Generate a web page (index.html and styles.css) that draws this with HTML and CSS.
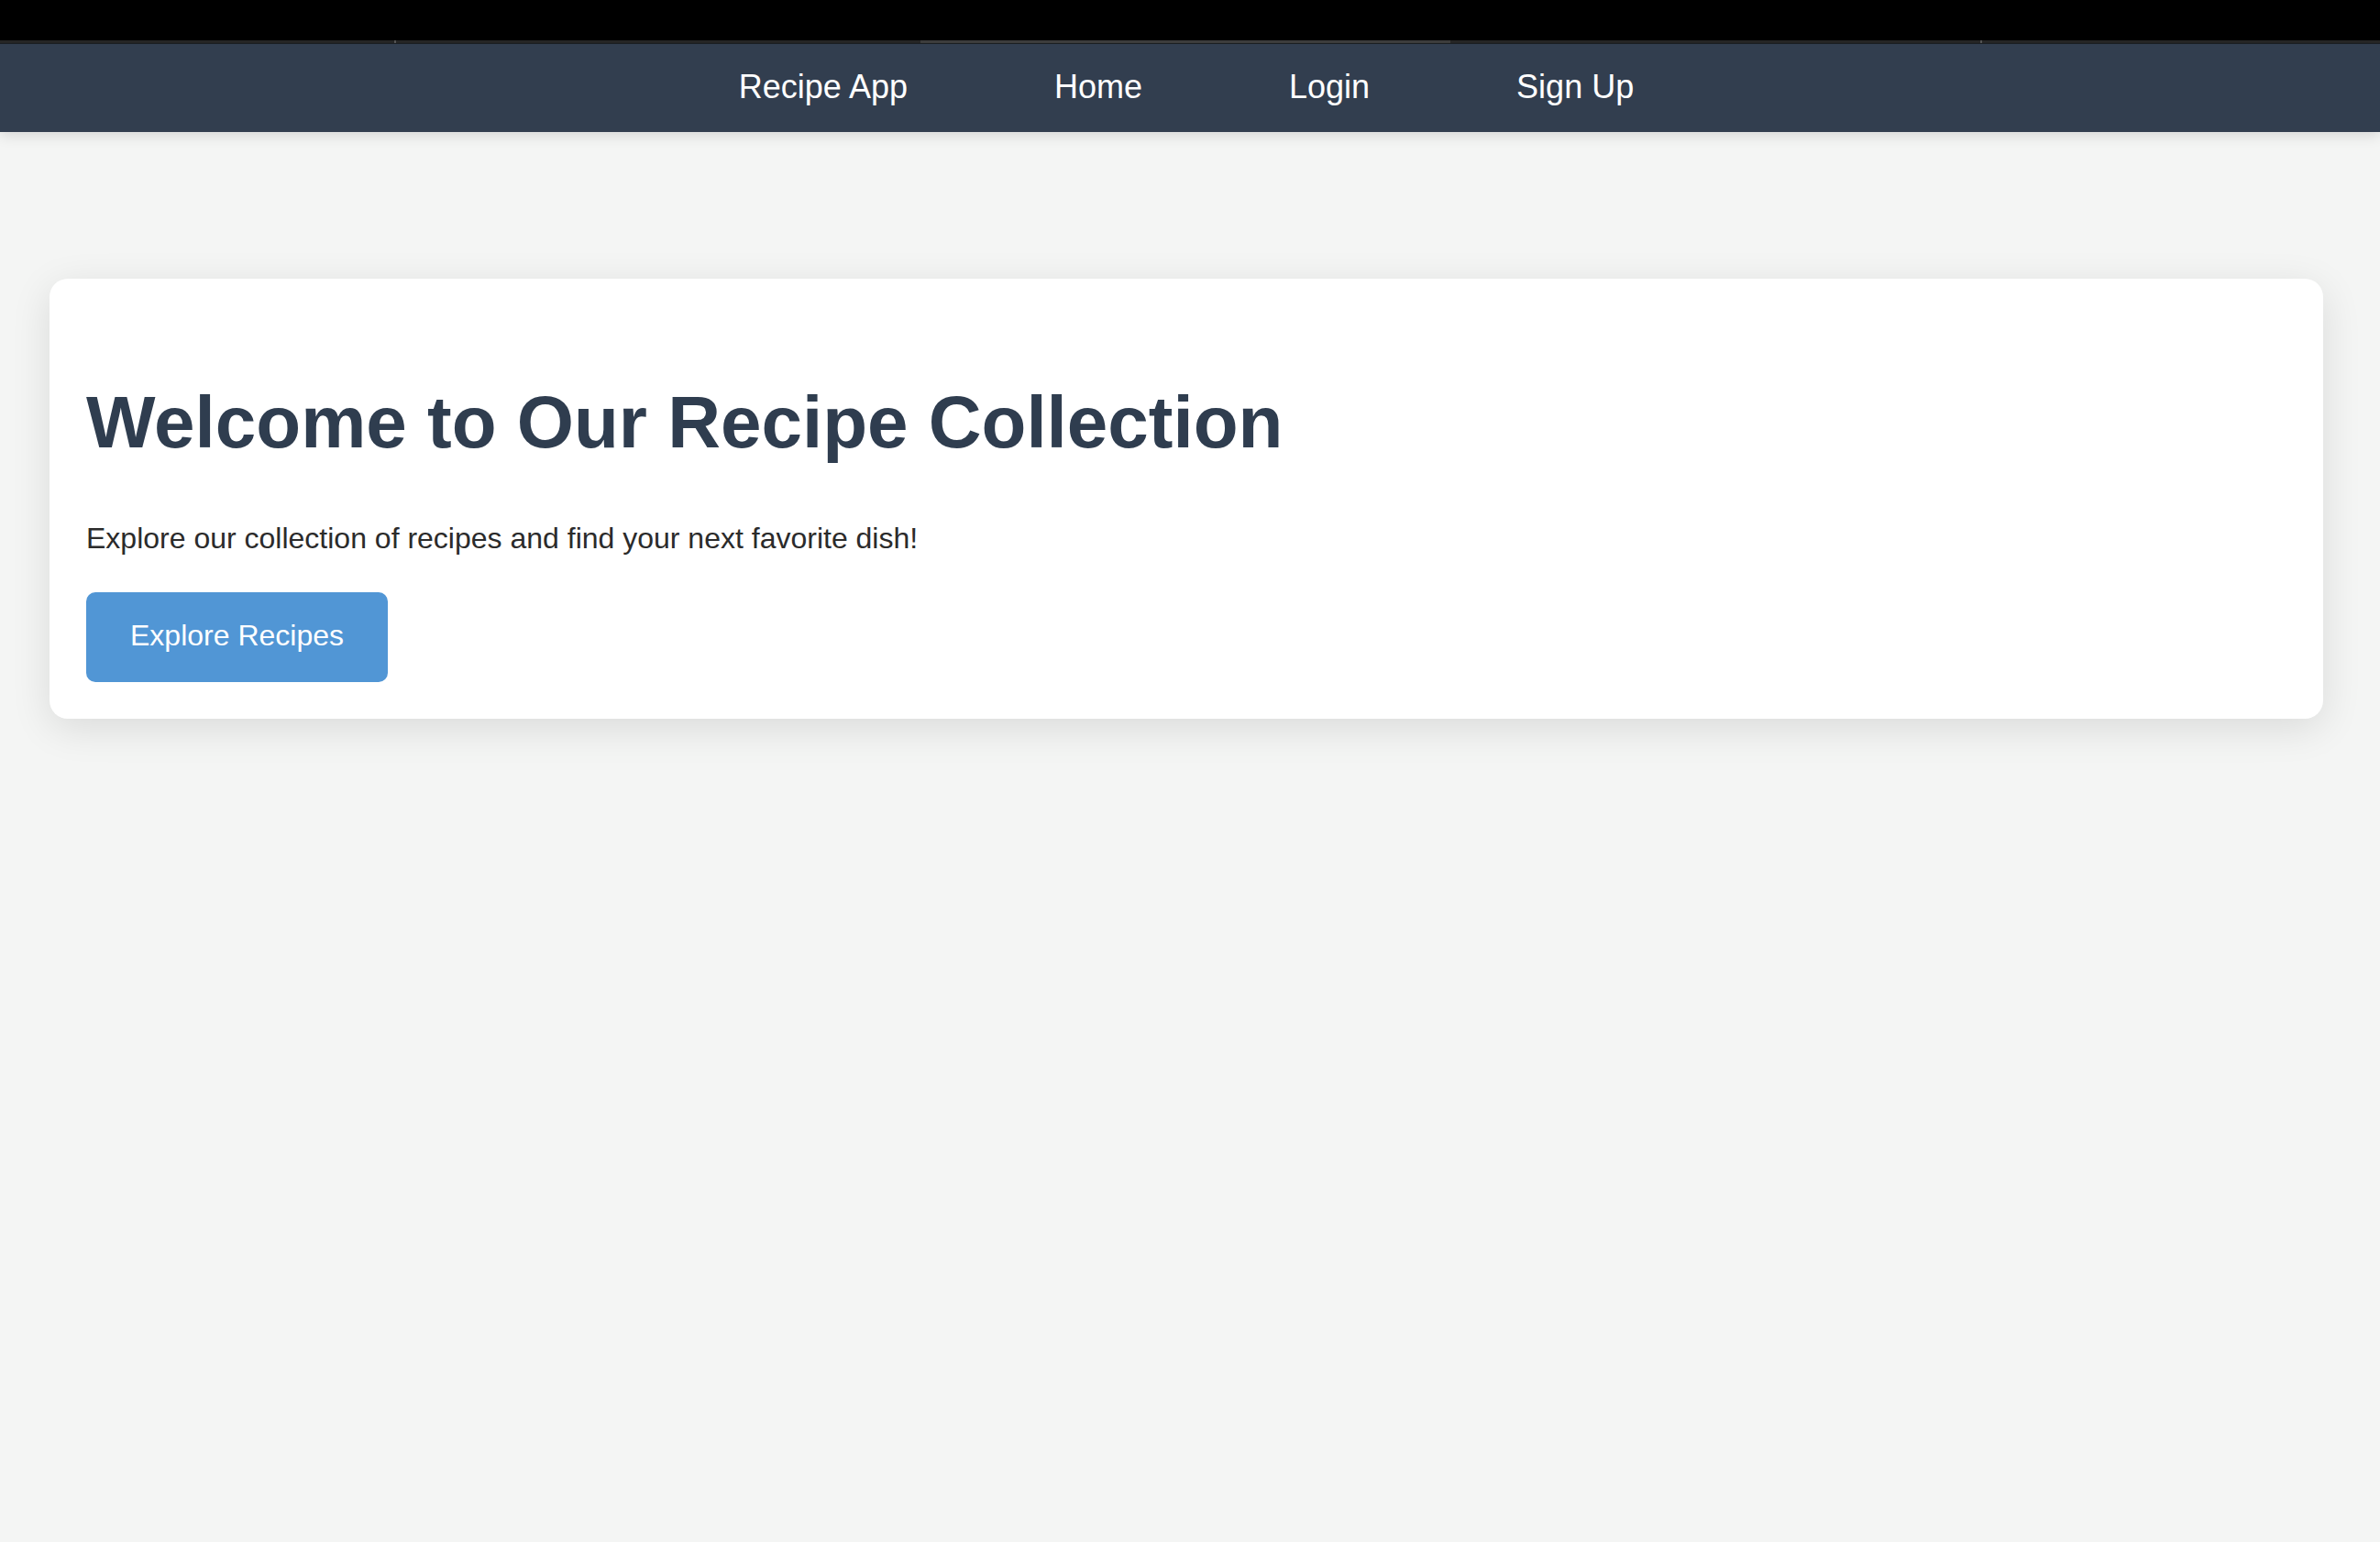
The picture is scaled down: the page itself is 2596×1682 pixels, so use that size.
FILE: index.html
```html
<!DOCTYPE html>
<html lang="en">
<head>
<meta charset="utf-8">
<title>Recipe App</title>
<link rel="stylesheet" href="styles.css">
</head>
<body>
  <div class="chrome">
    <div class="chrome-top"></div>
    <div class="chrome-strip">
      <span class="seg seg-a"></span>
      <span class="tick"></span>
      <span class="seg seg-b"></span>
      <span class="seg seg-active"></span>
      <span class="seg seg-c"></span>
      <span class="tick"></span>
      <span class="seg seg-d"></span>
    </div>
    <div class="chrome-line"></div>
  </div>
  <nav class="navbar">
    <a class="nav-link" href="#">Recipe App</a>
    <a class="nav-link" href="#">Home</a>
    <a class="nav-link" href="#">Login</a>
    <a class="nav-link" href="#">Sign Up</a>
  </nav>
  <main class="main">
    <section class="hero">
      <h1 class="hero-title">Welcome to Our Recipe Collection</h1>
      <p class="hero-text">Explore our collection of recipes and find your next favorite dish!</p>
      <a class="btn" href="#">Explore Recipes</a>
    </section>
  </main>
</body>
</html>
```

FILE: styles.css
```css
* {
  box-sizing: border-box;
}

html, body {
  margin: 0;
  padding: 0;
}

body {
  background: #f4f5f4;
  font-family: "Liberation Sans", Arial, Helvetica, sans-serif;
  min-height: 1682px;
}

.chrome {
  display: flex;
  flex-direction: column;
}

.chrome-top {
  height: 44px;
  background: #000;
}

.chrome-strip {
  height: 3px;
  display: flex;
  background: #262626;
}

.seg {
  height: 3px;
}

.seg-a {
  width: 430px;
  background: #262626;
}

.tick {
  width: 2px;
  background: #555;
}

.seg-b {
  width: 572px;
  background: #262626;
}

.seg-active {
  width: 578px;
  background: #3e3e3e;
}

.seg-c {
  width: 578px;
  background: #262626;
}

.seg-d {
  flex: 1;
  background: #262626;
}

.chrome-line {
  height: 1px;
  background: #1b1f24;
}

.navbar {
  height: 96px;
  background: #323e4f;
  display: flex;
  justify-content: center;
  align-items: center;
  gap: 160px;
  padding: 0 8px 3px 0;
  box-shadow: 0 4px 14px rgba(0, 0, 0, 0.12);
  position: relative;
  z-index: 1;
}

.nav-link {
  color: #ffffff;
  text-decoration: none;
  font-size: 36px;
  line-height: 42px;
}

.main {
  padding: 160px 0 0 54px;
}

.hero {
  width: 2480px;
  background: #ffffff;
  border-radius: 20px;
  padding: 40px 40px 40px 40px;
  box-shadow: 0 10px 44px rgba(0, 0, 0, 0.11);
  display: flex;
  flex-direction: column;
  align-items: flex-start;
}

.hero-title {
  margin: 71px 0 62px 0;
  font-size: 80px;
  line-height: 92px;
  font-weight: 700;
  color: #2f3d4f;
}

.hero-text {
  margin: 0 0 40px 0;
  font-size: 32px;
  line-height: 37px;
  color: #2b2b2b;
}

.btn {
  display: inline-block;
  background: #5196d5;
  color: #ffffff;
  text-decoration: none;
  font-size: 32px;
  line-height: 38px;
  padding: 28px 48px 32px 48px;
  border-radius: 10px;
}
```
